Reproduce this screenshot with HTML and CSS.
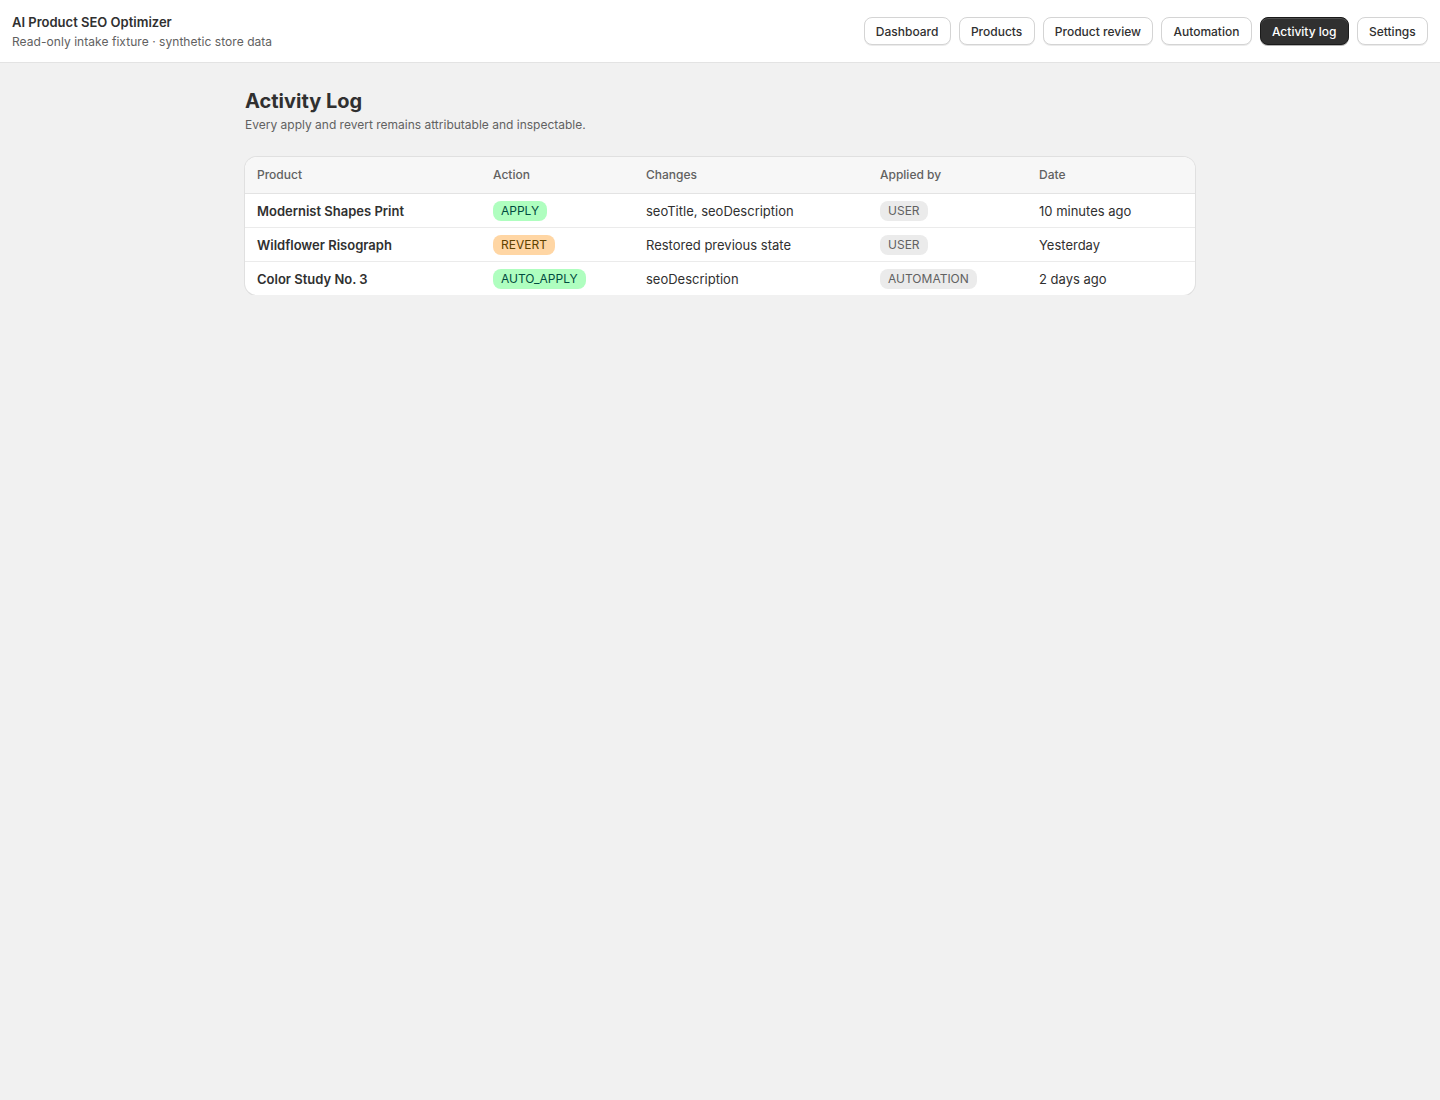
FILE: index.html
```html
<!DOCTYPE html>
<html lang="en">
<head>
    <meta charset="UTF-8">
    <meta name="viewport" content="width=device-width, initial-scale=1.0">
    <title>Activity Log - AI Product SEO Optimizer</title>
    <link rel="stylesheet" href="styles.css">
</head>
<body>

<header class="topbar">
    <div class="brand">
        <div class="brand-title">AI Product SEO Optimizer</div>
        <div class="brand-sub">Read-only intake fixture · synthetic store data</div>
    </div>
    <nav class="nav">
        <a class="nav-button" href="#">Dashboard</a>
        <a class="nav-button" href="#">Products</a>
        <a class="nav-button" href="#">Product review</a>
        <a class="nav-button" href="#">Automation</a>
        <a class="nav-button active" href="#">Activity log</a>
        <a class="nav-button" href="#">Settings</a>
    </nav>
</header>

<main class="page">
    <h1 class="page-title">Activity Log</h1>
    <p class="page-sub">Every apply and revert remains attributable and inspectable.</p>

    <div class="card">
        <table class="log-table">
            <thead>
                <tr>
                    <th class="col-product">Product</th>
                    <th class="col-action">Action</th>
                    <th class="col-changes">Changes</th>
                    <th class="col-by">Applied by</th>
                    <th>Date</th>
                </tr>
            </thead>
            <tbody>
                <tr>
                    <td class="product-name">Modernist Shapes Print</td>
                    <td><span class="badge badge-success">APPLY</span></td>
                    <td>seoTitle, seoDescription</td>
                    <td><span class="badge">USER</span></td>
                    <td>10 minutes ago</td>
                </tr>
                <tr>
                    <td class="product-name">Wildflower Risograph</td>
                    <td><span class="badge badge-warning">REVERT</span></td>
                    <td>Restored previous state</td>
                    <td><span class="badge">USER</span></td>
                    <td>Yesterday</td>
                </tr>
                <tr>
                    <td class="product-name">Color Study No. 3</td>
                    <td><span class="badge badge-success">AUTO_APPLY</span></td>
                    <td>seoDescription</td>
                    <td><span class="badge">AUTOMATION</span></td>
                    <td>2 days ago</td>
                </tr>
            </tbody>
        </table>
    </div>
</main>

</body>
</html>
```

FILE: styles.css
```css
body {
    font-family: Inter, "Noto Sans", sans-serif;
    margin: 0;
    padding: 0;
    background-color: #f1f1f1;
    color: #303030;
}

.topbar {
    display: flex;
    justify-content: space-between;
    align-items: center;
    height: 62px;
    padding: 0 12px;
    background-color: #fff;
    border-bottom: 1px solid #e3e3e3;
}

.brand-title {
    font-size: 13px;
    font-weight: 600;
    line-height: 20px;
    color: #303030;
}

.brand-sub {
    font-size: 12px;
    line-height: 18px;
    color: #616161;
    margin-top: 1px;
    letter-spacing: 0.05px;
}

.nav {
    display: flex;
    gap: 8px;
}

.nav-button {
    display: inline-flex;
    align-items: center;
    height: 28px;
    padding: 0 11.25px;
    box-sizing: border-box;
    font-size: 12px;
    font-weight: 500;
    color: #303030;
    text-decoration: none;
    background-color: #fff;
    border: 1px solid #d4d4d4;
    border-radius: 8px;
    box-shadow: 0 1px 0 rgba(0, 0, 0, 0.08);
}

.nav-button.active {
    background-color: #303030;
    border-color: #1a1a1a;
    color: #fff;
    box-shadow: 0 1px 0 rgba(0, 0, 0, 0.3), inset 0 1px 0 rgba(255, 255, 255, 0.15);
}

.page {
    width: 950px;
    margin: 0 auto;
    padding-top: 25px;
}

.page-title {
    font-size: 20px;
    font-weight: 700;
    line-height: 26px;
    margin: 0;
    color: #303030;
}

.page-sub {
    font-size: 12px;
    line-height: 18px;
    color: #616161;
    margin: 2px 0 0;
}

.card {
    margin-top: 23px;
    background-color: #fff;
    border-radius: 12px;
    overflow: hidden;
    box-shadow: 0 0 0 1px #e0e0e0, 0 1px 0 rgba(0, 0, 0, 0.1);
}

.log-table {
    width: 100%;
    border-collapse: collapse;
    font-size: 13px;
}

.log-table th {
    text-align: left;
    font-weight: 500;
    font-size: 12px;
    color: #616161;
    background-color: #f7f7f7;
    height: 34px;
    padding: 0 12px 2px;
    border-bottom: 1px solid #e3e3e3;
}

.log-table td {
    height: 33px;
    padding: 0 12px;
    color: #303030;
    border-bottom: 1px solid #ebebeb;
}

.log-table tbody tr:last-child td {
    border-bottom: none;
}

.col-product {
    width: 212px;
}

.col-action {
    width: 129px;
}

.col-changes {
    width: 210px;
}

.col-by {
    width: 135px;
}

.product-name {
    font-weight: 600;
}

.badge {
    display: inline-block;
    padding: 0 8px;
    line-height: 20px;
    border-radius: 8px;
    font-size: 12px;
    background-color: #ebebeb;
    color: #616161;
}

.badge-success {
    background-color: #affebf;
    color: #014b40;
}

.badge-warning {
    background-color: #ffd6a4;
    color: #5e4200;
}
```
